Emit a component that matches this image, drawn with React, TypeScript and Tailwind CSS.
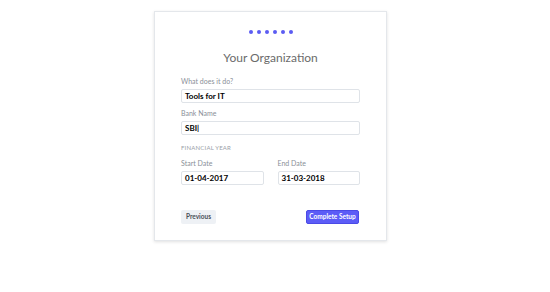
import React from "react";

const font = { fontFamily: "Lato, 'Open Sans', sans-serif" };

function Field({ label, value, className = "" }: { label: string; value: string; className?: string }) {
  return (
    <div className={"flex flex-col " + className}>
      <div className="text-[7px] leading-[9px] text-[#8a8f98]">{label}</div>
      <div className="mt-[3px] h-[14px] rounded-[2px] border border-[#dfe3e8] bg-white px-[3px] flex items-center text-[8px] font-bold text-black">
        {value}
      </div>
    </div>
  );
}

export default function App() {
  return (
    <div className="w-[550px] h-[292px] bg-white" style={font}>
      <div className="pt-[11px] pl-[154px]">
        <div className="w-[233px] h-[230px] border border-[#e4e7eb] shadow-[0_1px_3px_rgba(0,0,0,0.12)] bg-white px-[26px] pt-[18px] flex flex-col">
          <div className="flex justify-center gap-[4px]">
            {[0, 1, 2, 3, 4, 5].map((i) => (
              <div key={i} className="w-[4px] h-[4px] rounded-full bg-[#5b5cf2]" />
            ))}
          </div>
          <div className="mt-[16px] text-center text-[12px] leading-[16px] text-[#6b6b6b]">Your Organization</div>
          <Field className="mt-[11px]" label="What does it do?" value="Tools for IT" />
          <Field className="mt-[6px]" label="Bank Name" value="SBI|" />
          <div className="mt-[9px] text-[6px] leading-[8px] text-[#9aa0a8] tracking-[0.2px]">FINANCIAL YEAR</div>
          <div className="mt-[7px] flex gap-[14px]">
            <Field className="w-[83px]" label="Start Date" value="01-04-2017" />
            <Field className="w-[83px]" label="End Date" value="31-03-2018" />
          </div>
          <div className="mt-[25px] flex justify-between items-center">
            <button className="h-[14px] px-[5px] rounded-[2px] bg-[#eef1f5] text-[6.5px] font-bold text-[#4a4f57]">Previous</button>
            <button className="h-[14px] w-[53px] mr-[1px] rounded-[2px] bg-[#5c5cf7] border border-[#4a4ae6] text-[6.5px] font-bold text-white">Complete Setup</button>
          </div>
        </div>
      </div>
    </div>
  );
}
